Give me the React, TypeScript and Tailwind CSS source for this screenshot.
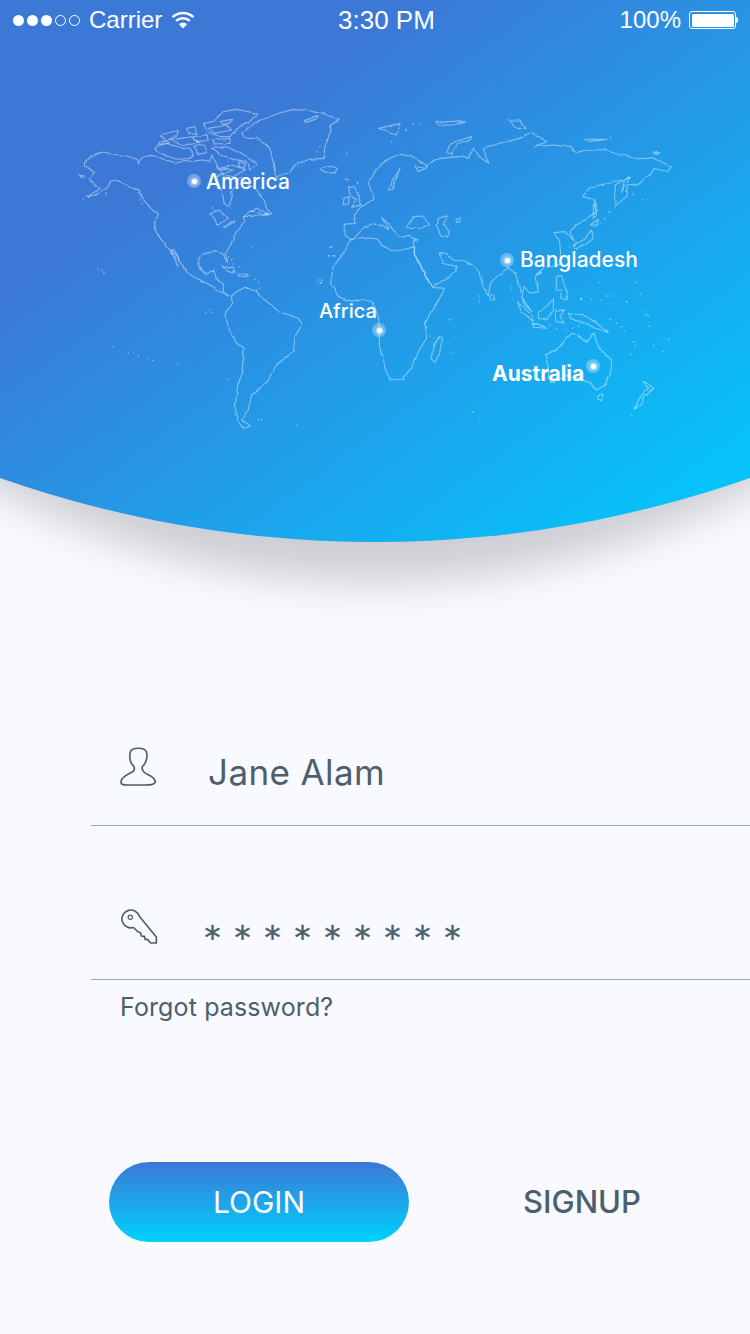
const westCoast = [
  'M78,212 L100,197 L130,186 L155,192 L200,198 L232,208 L235,219 L245,205 L265,197 L290,198 L310,208 L345,218 L385,214 L430,210 L450,215 L455,195 L470,222 L478,240 L495,235 L520,240 L480,255 L470,265 L478,285 L487,310 L492,340 L505,350 L515,325 L512,305 L530,292 L525,272 L545,262 L560,278 L590,300 L615,335 L620,355 L635,375 L600,372 L575,362 L550,382 L555,395 L545,410 L525,430 L512,465 L497,490 L503,518 L490,490 L465,485 L435,490 L416,505 L418,535 L440,555 L462,540 L465,565 L490,582 L490,605 L510,618 L480,608 L460,590 L425,572 L385,552 L370,525 L345,495 L320,470 L290,430 L283,400 L295,372 L270,352 L250,335 L238,300 L200,285 L170,270 L150,275 L140,295 L105,315 L80,322 L122,295 L88,268 L104,243 L76,232 Z',
  'M333,480 L345,482 L360,525 L352,528 Z',
  'M515,618 L515,640 L500,665 L498,685 L512,730 L530,760 L549,775 L547,850 L533,885 L526,950 L530,990 L550,1015 L568,1008 L548,990 L565,960 L575,915 L610,885 L625,870 L655,820 L700,787 L705,740 L725,705 L715,685 L680,672 L655,665 L640,650 L615,630 L590,605 L555,592 L530,605 Z',
  'M555,145 L590,145 L625,165 L640,205 L650,262 L690,245 L710,222 L745,208 L790,205 L795,170 L812,125 L812,105 L838,88 L790,72 L745,62 L700,58 L660,68 L610,88 L585,95 L558,118 L545,130 Z',
  'M490,65 L530,58 L590,70 L570,95 L540,110 L510,140 L480,140 L440,125 L430,100 L460,95 Z',
  'M455,175 L500,170 L540,190 L590,220 L570,240 L560,215 L510,205 L480,195 Z',
  'M285,175 L310,158 L350,170 L390,175 L400,195 L380,210 L340,205 L300,190 Z',
  'M300,135 L355,122 L350,140 L320,150 Z',
  'M330,150 L395,140 L420,160 L370,165 Z',
  'M380,115 L405,110 L410,130 L385,128 Z',
  'M455,150 L510,145 L510,160 L460,162 Z',
  'M480,235 L520,225 L555,240 L520,260 L490,255 Z',
  'M447,372 L480,360 L505,385 L490,395 L470,405 L465,385 Z',
  'M490,410 L525,392 L520,400 L495,412 Z',
  'M552,380 L590,355 L625,375 L590,378 Z',
  'M485,530 L520,535 L530,550 L505,545 Z',
  'M535,552 L560,552 L555,560 L535,558 Z',
  'M782,238 L810,228 L832,235 L825,248 L795,250 Z',
  'M730,92 L775,80 L770,88 L735,97 Z',
  'M55,255 L70,258 L62,262 Z',
  'M400,140 L440,135 L445,150 L410,155 Z',
  'M405,170 L430,165 L440,185 L415,190 Z',
  'M445,115 L500,105 L515,120 L465,130 Z',
  'M480,95 L515,88 L510,100 L485,103 Z',
  'M295,160 L315,150 L325,158 L305,165 Z',
  'M540,215 L555,222 L548,235 L535,228 Z',
];

const westDots = [
  [245, 315], [240, 330], [245, 345], [70, 330], [85, 322], [108, 315], [135, 312], [575, 470], [505, 500], [515, 510],
  [520, 525], [540, 530], [565, 558], [585, 565], [595, 575], [600, 595], [590, 600], [560, 595], [475, 565], [115, 535],
  [125, 540], [132, 550], [440, 668], [450, 660], [458, 670], [160, 770], [205, 790], [222, 788], [235, 798], [262, 806],
  [282, 812], [355, 823], [380, 818], [505, 868], [595, 988], [605, 988], [712, 1006], [525, 920], [527, 945], [522, 975],
  [813, 472], [810, 498], [825, 498], [775, 570], [785, 570], [775, 578], [787, 578], [860, 190], [865, 270], [893, 278],
  [500, 210], [520, 212], [458, 355], [770, 185], [780, 170], [800, 150], [810, 110],
];

const eastCoast = [
  'M92,448 L72,432 L73,403 L105,400 L100,372 L125,350 L165,325 L150,295 L148,270 L180,225 L210,205 L245,190 L285,205 L323,228 L305,240 L295,245 L285,228 L315,232 L340,212 L362,205 L415,200 L445,205 L462,172 L478,200 L505,220 L490,175 L540,160 L600,145 L640,128 L680,155 L645,170 L700,165 L750,170 L770,190 L815,180 L855,180 L900,195 L955,207 L1000,203 L1055,230 L1040,247 L1005,235 L960,280 L925,285 L920,320 L888,345 L885,285 L930,262 L905,270 L850,282 L810,292 L788,320 L825,330 L830,365 L800,385 L770,405 L750,425 L762,452 L735,425 L700,428 L718,450 L722,490 L720,520 L670,535 L645,560 L655,605 L630,610 L612,590 L605,620 L635,665 L610,640 L600,590 L585,550 L565,533 L530,560 L512,578 L505,615 L490,590 L475,545 L465,530 L440,515 L400,510 L375,490 L358,488 L370,520 L412,530 L385,565 L335,590 L320,560 L300,520 L283,492 L280,450 L295,450 L268,440 L240,440 L225,425 L185,385 L205,420 L165,398 L125,420 L100,448 Z',
  'M92,450 L70,490 L40,530 L32,578 L55,620 L100,635 L135,628 L160,640 L175,680 L178,720 L178,770 L195,825 L210,870 L245,868 L278,830 L295,785 L320,745 L315,700 L345,650 L375,595 L335,592 L310,545 L283,492 L285,470 L245,480 L215,482 L190,468 L170,447 L130,442 Z',
  'M260,410 L280,380 L310,378 L325,405 L300,415 L270,415 Z',
  'M355,385 L380,377 L370,405 L388,425 L382,442 L362,438 L352,410 Z',
  'M408,390 L420,383 L420,395 L410,397 Z',
  'M360,740 L368,745 L358,790 L345,818 L333,805 L345,762 Z',
  'M85,290 L105,295 L125,345 L95,352 L110,330 L92,315 Z',
  'M72,325 L88,320 L85,342 L70,342 Z',
  'M380,190 L390,160 L455,140 L450,150 L410,165 L395,195 Z',
  'M175,115 L245,100 L225,135 L200,125 Z',
  'M350,97 L435,92 L400,105 L355,105 Z',
  'M205,300 L240,235 L230,265 L215,300 Z',
  'M570,90 L600,90 L615,115 L585,115 Z',
  'M790,148 L860,148 L810,155 Z',
  'M1000,190 L1020,187 L1015,193 Z',
  'M915,262 L930,262 L905,310 Z',
  'M760,465 L790,450 L815,420 L820,445 L795,465 L770,475 Z',
  'M810,405 L835,388 L830,405 Z',
  'M820,330 L830,375 L820,385 Z',
  'M658,545 L665,550 L655,556 Z',
  'M510,615 L522,615 L520,630 L510,630 Z',
  'M710,560 L725,557 L735,590 L745,610 L740,630 L722,625 L725,600 L705,600 Z',
  'M655,670 L700,628 L700,660 L680,690 L655,685 Z',
  'M590,635 L630,670 L640,695 L605,665 Z',
  'M640,700 L680,715 L640,712 Z',
  'M705,665 L735,658 L720,680 L732,700 L708,695 Z',
  'M745,670 L800,680 L830,700 L865,725 L825,715 L790,695 L755,690 Z',
  'M675,795 L720,770 L735,745 L762,730 L800,757 L822,730 L838,775 L875,810 L872,850 L855,885 L830,900 L815,880 L790,868 L745,858 L695,875 L682,860 L685,830 Z',
  'M833,918 L850,915 L845,932 L835,928 Z',
  'M968,875 L997,893 L985,915 L975,912 L960,945 L942,955 L965,915 L985,895 Z',
];

const eastDots = [
  [30, 472], [30, 497], [42, 497], [5, 572], [5, 580], [280, 103], [300, 103], [260, 118], [215, 155], [80, 265], [112, 278],
  [935, 315], [968, 332], [885, 350], [870, 365], [855, 385], [840, 398], [477, 618], [477, 630], [477, 640], [575, 590],
  [575, 600], [580, 628], [385, 690], [393, 688], [315, 700], [320, 715], [330, 735], [345, 745], [388, 760], [393, 788],
  [402, 786], [838, 575], [945, 577], [862, 618], [878, 614], [782, 628], [815, 628], [845, 630], [922, 635], [962, 612],
  [940, 668], [968, 660], [978, 675], [985, 680], [988, 705], [995, 708], [870, 688], [890, 700], [905, 710], [912, 722],
  [940, 755], [945, 768], [1000, 765], [1048, 748], [1030, 785], [935, 790], [935, 977], [460, 968], [480, 996], [765, 465],
  [748, 470], [650, 645], [690, 705], [710, 720], [735, 718], [760, 712], [775, 705], [565, 90], [1010, 188], [872, 143],
];

const pins = [
  { id: 'america', className: 'left-[187px] top-[134px]' },
  { id: 'bangladesh', className: 'left-[500px] top-[213px]' },
  { id: 'africa', className: 'left-[372px] top-[283px]' },
  { id: 'australia', className: 'left-[586px] top-[319px]' },
];

const labels = [
  { text: 'America', className: 'left-[206px] top-[129px] text-[21px] font-medium' },
  { text: 'Bangladesh', className: 'left-[520px] top-[207px] text-[21px] font-medium' },
  { text: 'Africa', className: 'left-[319px] top-[258px] text-[20px] font-medium' },
  { text: 'Australia', className: 'left-[492px] top-[321px] text-[21px] font-bold' },
];

function WorldMap() {
  return (
    <svg viewBox="0 40 750 502" className="block h-full w-full" fill="none">
      <defs>
        {/* roughens the straight segments so they read as coastline */}
        <filter id="coast" filterUnits="userSpaceOnUse" x="0" y="40" width="750" height="502">
          <feTurbulence type="fractalNoise" baseFrequency="0.1" numOctaves="2" seed="4" />
          <feDisplacementMap in="SourceGraphic" scale="3.5" xChannelSelector="R" yChannelSelector="G" />
          <feGaussianBlur stdDeviation="0.35" />
        </filter>
      </defs>
      <g filter="url(#coast)">
        <g transform="translate(60 90) scale(0.3333)" stroke="#ffffff" strokeOpacity="0.42" strokeWidth="3.4" strokeLinejoin="round">
          {westCoast.map((d, i) => (
            <path key={i} d={d} />
          ))}
          {westDots.map(([x, y], i) => (
            <circle key={i} cx={x} cy={y} r="2.2" fill="#ffffff" fillOpacity="0.5" stroke="none" />
          ))}
        </g>
        <g transform="translate(320 90) scale(0.3333)" stroke="#ffffff" strokeOpacity="0.42" strokeWidth="3.4" strokeLinejoin="round">
          {eastCoast.map((d, i) => (
            <path key={i} d={d} />
          ))}
          {eastDots.map(([x, y], i) => (
            <circle key={i} cx={x} cy={y} r="2.2" fill="#ffffff" fillOpacity="0.5" stroke="none" />
          ))}
        </g>
      </g>
    </svg>
  );
}

function StatusBar() {
  return (
    <div className="flex h-10 items-center pl-[13px] pr-[12px] font-['Liberation_Sans',sans-serif] text-[24px] leading-none text-white">
      <div className="flex w-[325px] items-center">
        <div className="flex gap-[3px]">
          <span className="h-[11px] w-[11px] rounded-full bg-white" />
          <span className="h-[11px] w-[11px] rounded-full bg-white" />
          <span className="h-[11px] w-[11px] rounded-full bg-white" />
          <span className="h-[11px] w-[11px] rounded-full border border-white" />
          <span className="h-[11px] w-[11px] rounded-full border border-white" />
        </div>
        <span className="ml-[9px]">Carrier</span>
        <svg viewBox="0 0 24 18" className="ml-[9px] h-[18px] w-[24px]" fill="none" stroke="#ffffff" strokeWidth="2.4">
          <path d="M1.5 6.2 C7.5 0.6 16.5 0.6 22.5 6.2" />
          <path d="M5.2 9.8 C9 6.3 15 6.3 18.8 9.8" />
          <path d="M12 17.5 L8 13.2 C10.3 11.3 13.7 11.3 16 13.2 Z" fill="#ffffff" stroke="none" />
        </svg>
      </div>
      <span className="text-[26px]">3:30 PM</span>
      <div className="flex flex-1 items-center justify-end">
        <span>100%</span>
        <div className="ml-[8px] flex items-center">
          <div className="h-[18px] w-[47px] rounded-[3px] border border-white p-[1.5px]">
            <div className="h-full w-full rounded-[1.5px] bg-white" />
          </div>
          <div className="h-[6px] w-[2px] rounded-r-full bg-white" />
        </div>
      </div>
    </div>
  );
}

function Hero() {
  return (
    <div className="relative">
      {/* soft shadow under the curve, narrower than the header itself */}
      <div className="absolute left-[-435px] top-[-1037px] h-[1620px] w-[1620px] rounded-full bg-black/[0.17] blur-[20px]" />
      <div className="relative h-[543px] bg-[linear-gradient(to_bottom_right,#3c78d6_27%,#00ccff_100%)] [clip-path:circle(1131px_at_375px_-589px)]">
        <StatusBar />
        <div className="relative h-[502px]">
          <WorldMap />
          {pins.map((pin) => (
            <div key={pin.id} className={`absolute flex h-[14px] w-[14px] items-center justify-center rounded-full bg-white/30 ${pin.className}`}>
              <div className="h-[5px] w-[5px] rounded-full bg-white shadow-[0_0_2px_1px_rgba(255,255,255,0.6)]" />
            </div>
          ))}
          {labels.map((label) => (
            <span key={label.text} className={`absolute font-['Inter',sans-serif] leading-[26px] text-white ${label.className}`}>
              {label.text}
            </span>
          ))}
        </div>
      </div>
    </div>
  );
}

function UserIcon() {
  return (
    <svg viewBox="85 45 115 122" className="h-[41px] w-[38px]" fill="none" stroke="#4d5f6b" strokeWidth="5" strokeLinejoin="round">
      <path d="M120,60 C125,50 160,45 168,62 C172,75 168,95 156,106 C152,116 158,124 175,132 C188,138 197,148 194,155 C190,162 180,162 165,162 L110,162 C96,162 88,160 92,148 C96,136 112,130 126,122 C133,116 132,108 128,103 C118,95 115,75 120,60 Z" />
    </svg>
  );
}

function KeyIcon() {
  return (
    <svg viewBox="90 535 112 110" className="h-[37px] w-[37px]" fill="none" stroke="#4d5f6b" strokeWidth="5" strokeLinejoin="round">
      <path d="M146,560 L197,622 L197,640 L180,640 L170,629 L163,629 L161,620 L152,619 L149,609 L141,606 L128,593 A27,27 0 1 1 146,560 Z" />
      <circle cx="118" cy="562" r="6.5" strokeWidth="3.5" />
    </svg>
  );
}

export default function App() {
  return (
    <div className="relative h-[1334px] w-[750px] overflow-hidden bg-[#f8faff] font-['Inter',sans-serif] text-[#4d5f6b]">
      <Hero />

      {/* Form */}
      <div className="relative pl-[91px] pt-[203px]">
        <div className="flex h-[80px] items-start border-b border-[#9ea7ae] pl-[28px]">
          <UserIcon />
          <span className="ml-[51px] mt-[4px] text-[35px] font-normal leading-[44px] tracking-[0.4px]">Jane Alam</span>
        </div>
        <div className="mt-[73px] flex h-[81px] items-start border-b border-[#9ea7ae] pl-[30px]">
          <div className="pt-[9px]">
            <KeyIcon />
          </div>
          <div className="ml-[45px] mt-[18px] flex gap-[11px] font-['DejaVu_Sans',sans-serif] text-[32px] leading-[40px] [-webkit-text-stroke:0.5px_#4d5f6b]">
            {Array.from({ length: 9 }).map((_, i) => (
              <span key={i} className="w-[19px] text-center">*</span>
            ))}
          </div>
        </div>
        <p className="mt-[9px] pl-[29px] text-[25px] leading-[36px] tracking-[0.12px]">Forgot password?</p>
      </div>

      {/* Buttons */}
      <div className="relative mt-[137px] flex items-center pl-[109px]">
        <button className="h-[80px] w-[300px] rounded-[40px] bg-[linear-gradient(to_bottom,#3c78d6,#00d2ff)] text-[30px] font-normal text-white">
          LOGIN
        </button>
        <button className="ml-[114px] text-[31px] font-medium text-[#4d5f6b]">SIGNUP</button>
      </div>
    </div>
  );
}
